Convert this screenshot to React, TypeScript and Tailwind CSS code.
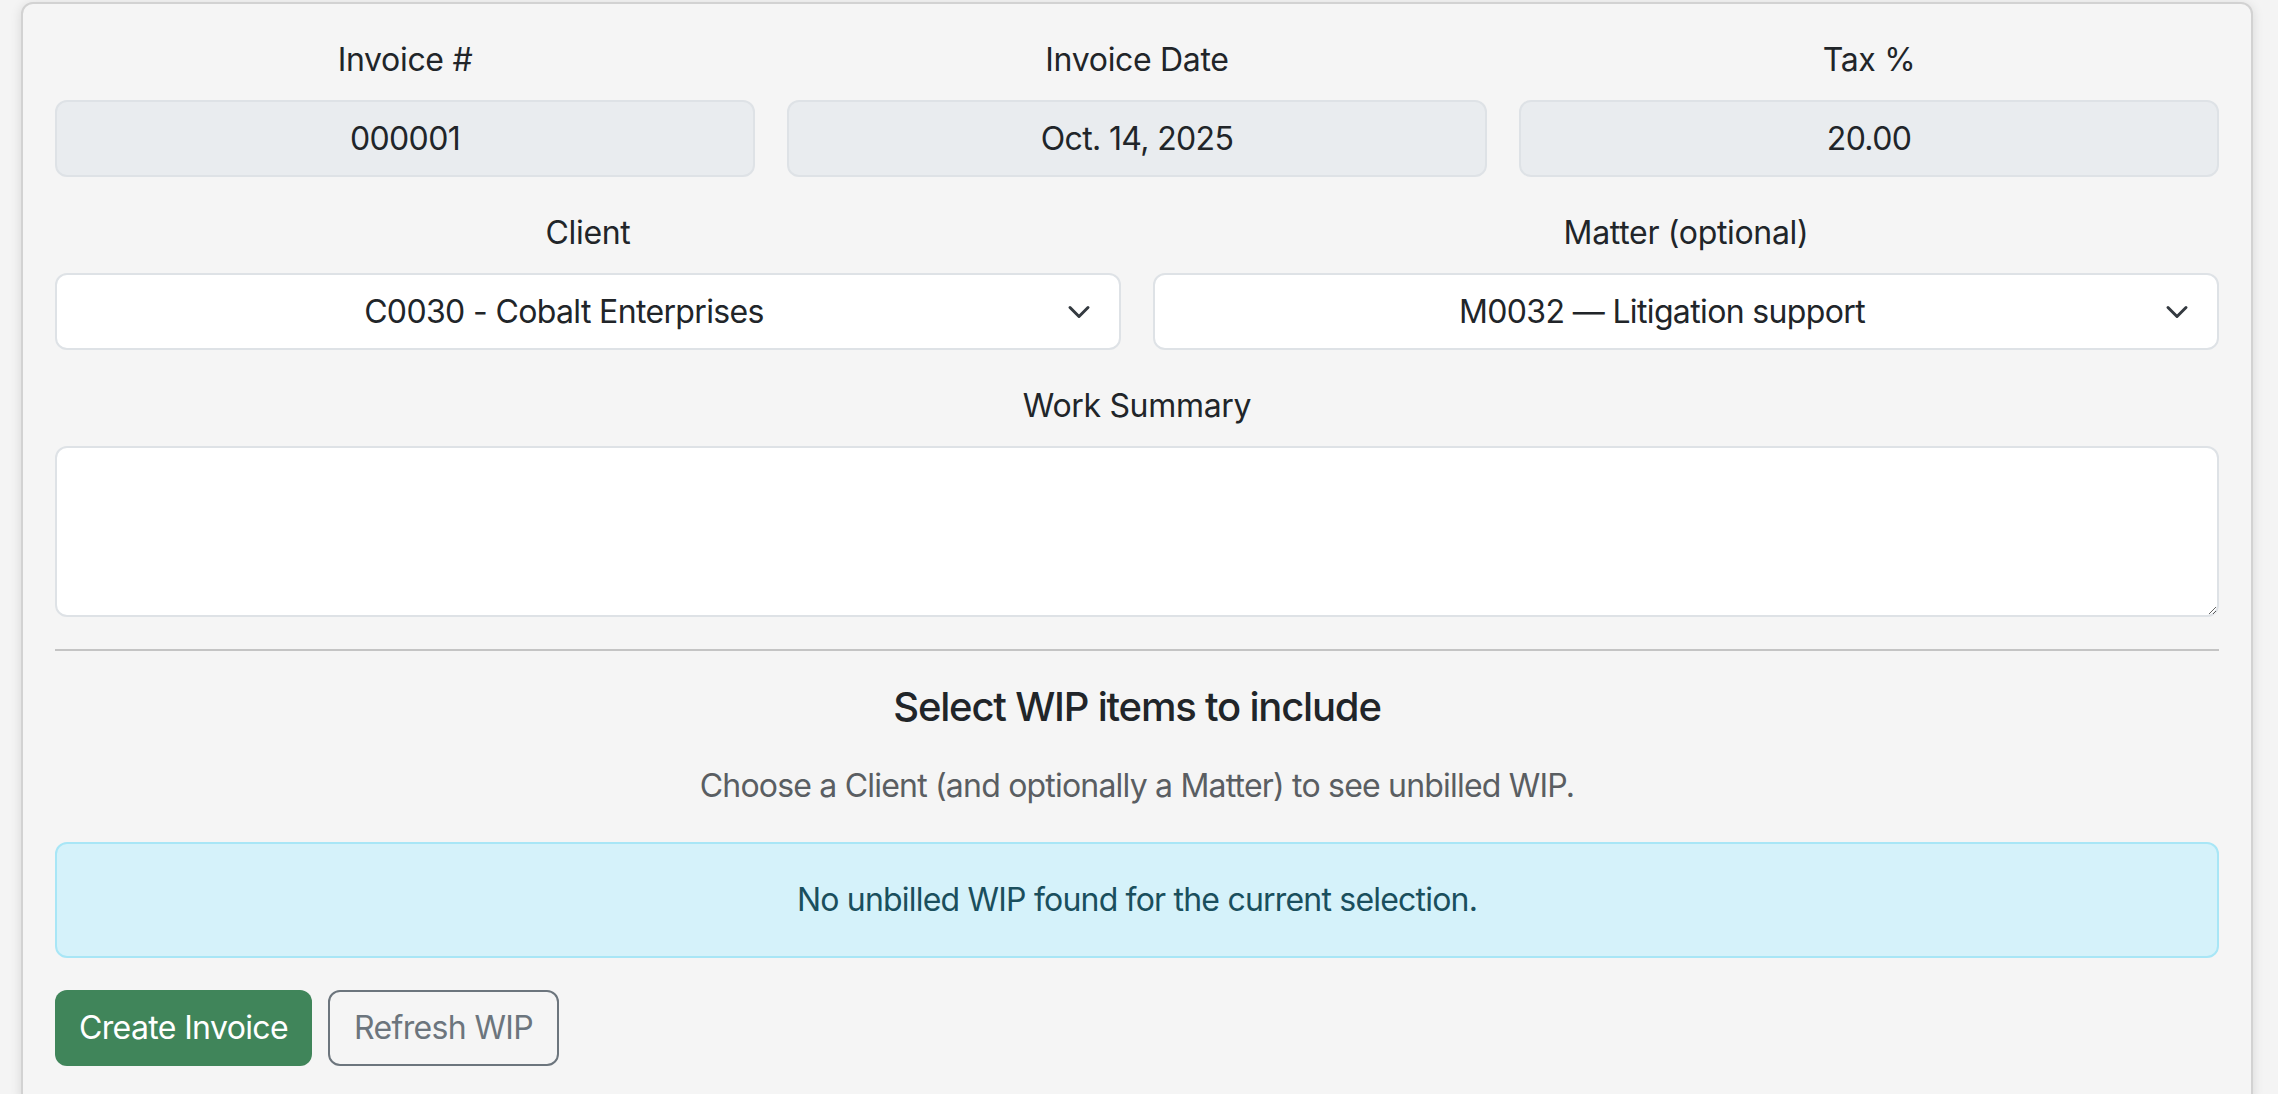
import { useState } from "react";

const Chevron = () => (
  <svg
    width="24"
    height="24"
    viewBox="0 0 16 16"
    fill="none"
    stroke="#343a40"
    strokeWidth="2"
    strokeLinecap="round"
    strokeLinejoin="round"
    className="pointer-events-none absolute right-[30px] top-1/2 -translate-y-1/2"
  >
    <path d="m2 5 6 6 6-6" />
  </svg>
);

type FieldProps = {
  label: string;
  children: React.ReactNode;
};

const Field = ({ label, children }: FieldProps) => (
  <div className="flex flex-col">
    <label className="mb-4 text-center text-[32px] leading-[48px]">{label}</label>
    {children}
  </div>
);

const App = () => {
  const [client, setClient] = useState("C0030");
  const [matter, setMatter] = useState("M0032");
  const [summary, setSummary] = useState("");

  const readOnlyInput =
    "h-[77px] w-full rounded-[12px] border-2 border-[#dee2e6] bg-[#e9ecef] px-6 text-center text-[32px] leading-[48px] tracking-[-0.02em] text-[#212529] outline-none";
  const selectInput =
    "h-[77px] w-full appearance-none rounded-[12px] border-2 border-[#dee2e6] bg-white pl-6 pr-[72px] text-center text-[32px] leading-[48px] tracking-[-0.02em] text-[#212529] outline-none";

  return (
    <div className="min-h-screen bg-[#f4f4f4] font-['Inter','Liberation_Sans',sans-serif] tracking-[-0.02em] text-[#212529]">
      <div className="ml-[21px] mr-[25px] pt-[2px]">
        <div className="rounded-t-[12px] border-2 border-[#d2d2d2] bg-[#f5f5f5] p-8 shadow-[0_2px_12px_rgba(0,0,0,0.12)]">
          <div className="mb-8 grid grid-cols-3 gap-8">
            <Field label="Invoice #">
              <input className={readOnlyInput} value="000001" readOnly />
            </Field>
            <Field label="Invoice Date">
              <input className={readOnlyInput} value="Oct. 14, 2025" readOnly />
            </Field>
            <Field label="Tax %">
              <input className={readOnlyInput} value="20.00" readOnly />
            </Field>
          </div>

          <div className="mb-8 grid grid-cols-2 gap-8">
            <Field label="Client">
              <div className="relative">
                <select
                  className={selectInput}
                  value={client}
                  onChange={(e) => setClient(e.target.value)}
                >
                  <option value="C0030">C0030 - Cobalt Enterprises</option>
                </select>
                <Chevron />
              </div>
            </Field>
            <Field label="Matter (optional)">
              <div className="relative">
                <select
                  className={selectInput}
                  value={matter}
                  onChange={(e) => setMatter(e.target.value)}
                >
                  <option value="M0032">M0032 — Litigation support</option>
                </select>
                <Chevron />
              </div>
            </Field>
          </div>

          <div className="mb-8">
            <Field label="Work Summary">
              <textarea
                rows={3}
                className="h-[171px] w-full rounded-[12px] border-2 border-[#dee2e6] bg-white px-6 py-3 text-[32px] leading-[48px] outline-none"
                value={summary}
                onChange={(e) => setSummary(e.target.value)}
              />
            </Field>
          </div>

          <hr className="mb-8 border-t-2 border-[#c4c4c4]" />

          <h5 className="mb-[31px] text-center text-[40px] font-medium leading-[48px] tracking-[-0.03em]">
            Select WIP items to include
          </h5>
          <p className="mb-8 text-center text-[32px] leading-[48px] tracking-[-0.025em] text-[#5a5e62]">
            Choose a Client (and optionally a Matter) to see unbilled WIP.
          </p>

          <div className="mb-8 rounded-[12px] border-2 border-[#a8e6f6] bg-[#d5f2fa] px-8 py-8 text-center text-[32px] leading-[48px] tracking-[-0.025em] text-[#1a4f5d]">
            No unbilled WIP found for the current selection.
          </div>

          <div className="flex gap-4">
            <button className="h-[76px] rounded-[12px] bg-[#40855a] px-6 text-[32px] leading-[48px] tracking-[-0.02em] text-white">
              Create Invoice
            </button>
            <button className="h-[76px] rounded-[12px] border-2 border-[#6c757d] px-6 text-[32px] leading-[48px] tracking-[-0.02em] text-[#6c757d]">
              Refresh WIP
            </button>
          </div>
        </div>
      </div>
    </div>
  );
};

export default App;
